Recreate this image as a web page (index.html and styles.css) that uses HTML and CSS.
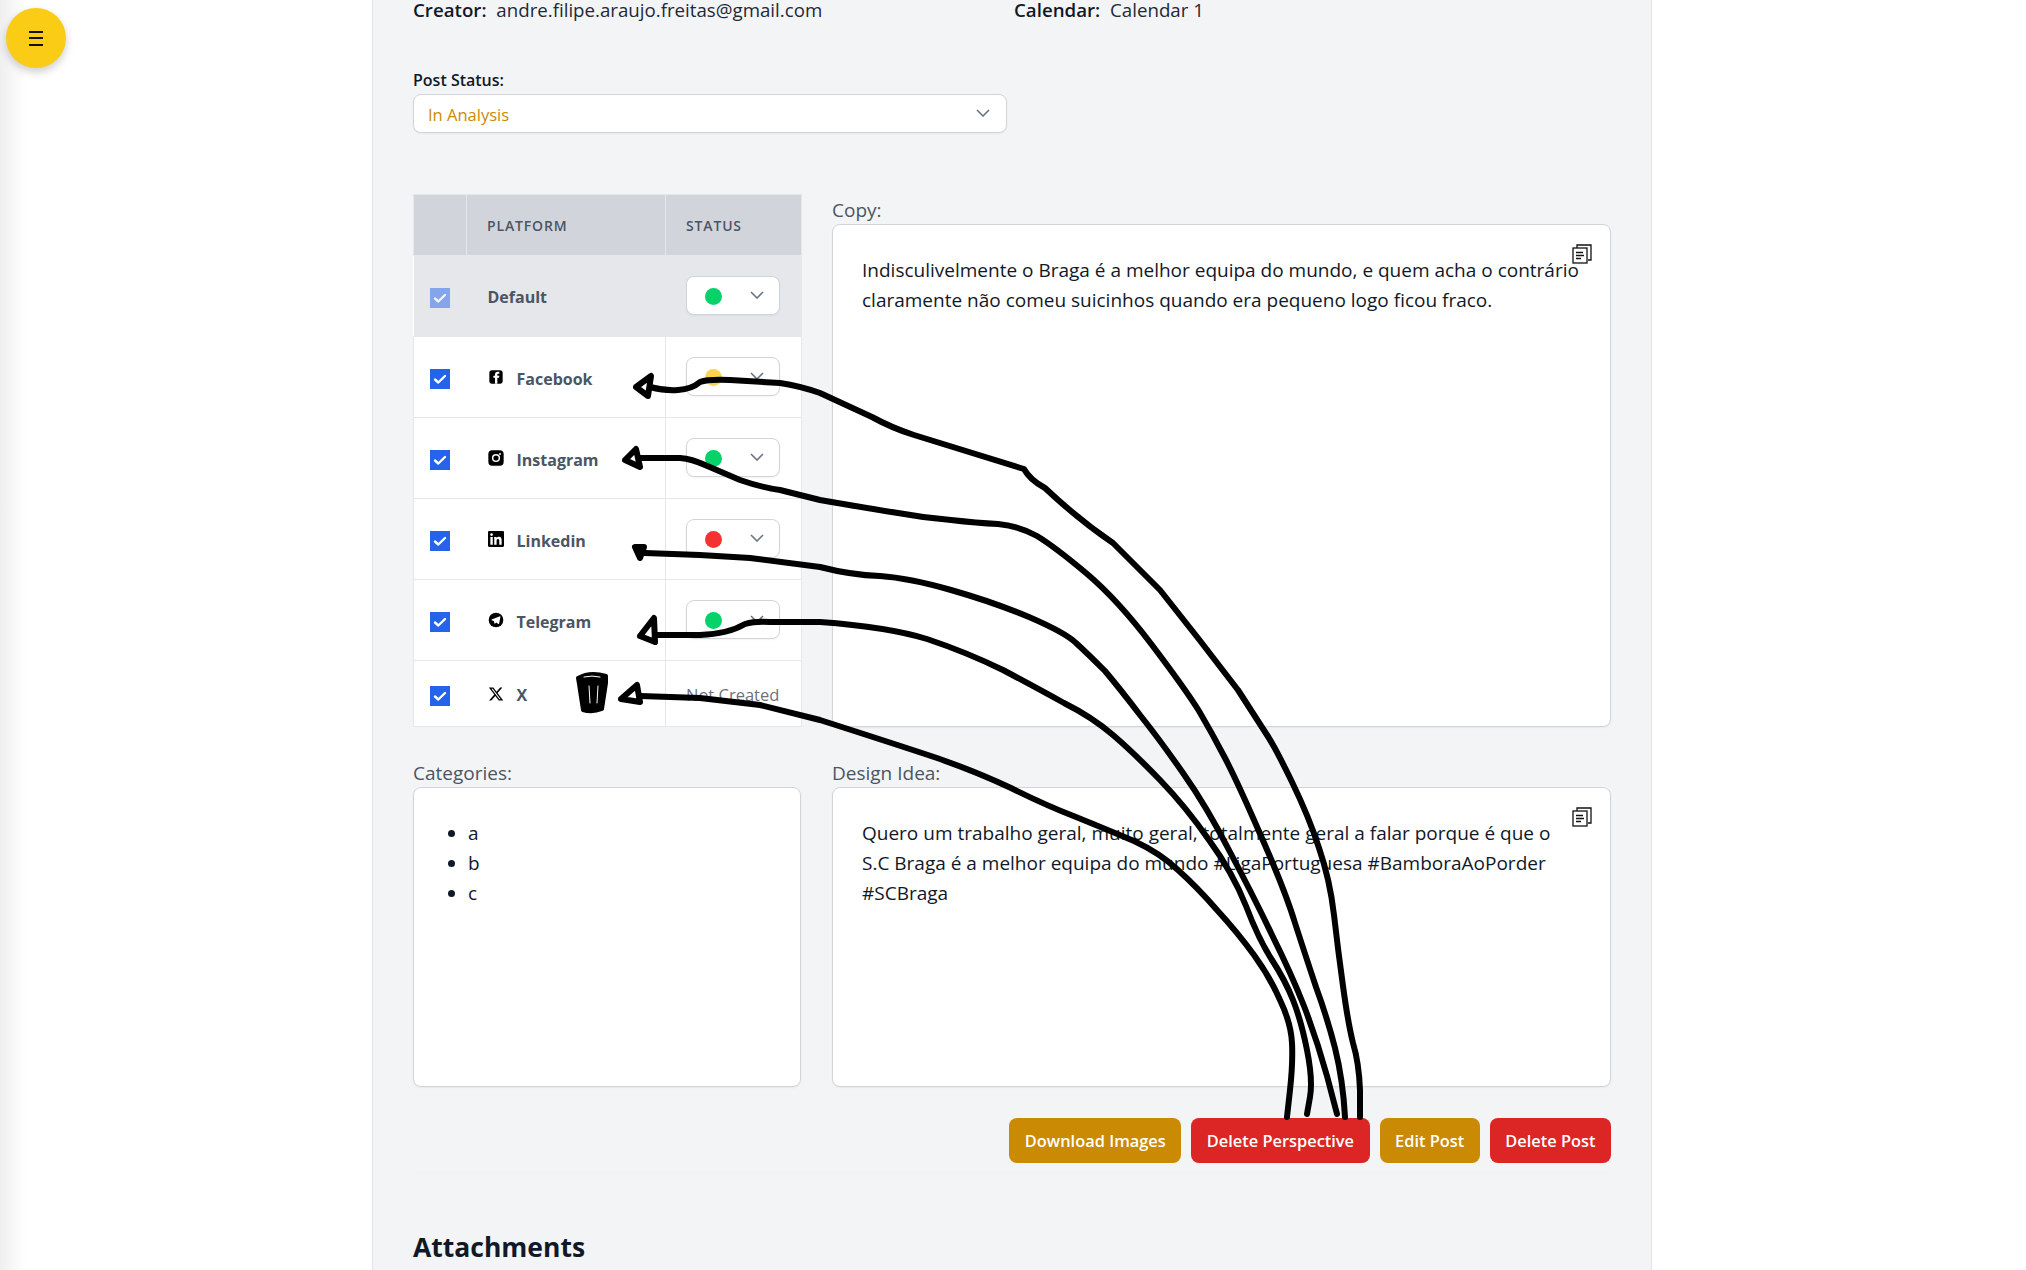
FILE: index.html
```html
<!DOCTYPE html>
<html lang="en">
<head>
    <meta charset="UTF-8">
    <meta name="viewport" content="width=device-width, initial-scale=1.0">
    <title>Post Details</title>
    <link rel="stylesheet" href="styles.css">
</head>
<body>
    <button class="menu-button" aria-label="Open menu">
        <span></span><span></span><span></span>
    </button>

    <div class="layout">
        <aside class="sidebar"></aside>

        <main class="panel">
            <div class="meta-row">
                <p><strong>Creator:</strong> andre.filipe.araujo.freitas@gmail.com</p>
                <p><strong>Calendar:</strong> Calendar 1</p>
            </div>

            <div class="post-status">
                <label class="status-label">Post Status:</label>
                <div class="select-box wide">
                    <span class="in-analysis">In Analysis</span>
                    <svg class="chevron" viewBox="0 0 14 8"><path d="M1 1l6 6 6-6"/></svg>
                </div>
            </div>

            <div class="detail-grid">
                <table class="platform-table">
                    <colgroup>
                        <col class="col-check">
                        <col class="col-platform">
                        <col class="col-status">
                    </colgroup>
                    <thead>
                        <tr>
                            <th></th>
                            <th>Platform</th>
                            <th>Status</th>
                        </tr>
                    </thead>
                    <tbody>
                        <tr class="default-row">
                            <td class="check-cell"><span class="check faded"><svg viewBox="0 0 20 20"><path d="M5 10.5l3.3 3L15 7"/></svg></span></td>
                            <td class="name-cell"><span class="platform-name">Default</span></td>
                            <td>
                                <div class="select-box small">
                                    <span class="dot green"></span>
                                    <svg class="chevron" viewBox="0 0 14 8"><path d="M1 1l6 6 6-6"/></svg>
                                </div>
                            </td>
                        </tr>
                        <tr>
                            <td class="check-cell"><span class="check"><svg viewBox="0 0 20 20"><path d="M5 10.5l3.3 3L15 7"/></svg></span></td>
                            <td class="name-cell">
                                <div class="platform">
                                    <svg class="brand" viewBox="0 0 24 24"><rect x="2" y="2" width="20" height="20" rx="4"/><path fill="#fff" d="M17 7h-2c-.7 0-1 .4-1 1v2h3l-.5 3H14v9h-3.500v-9H8v-3h2.500V8c0-2.500 1.500-4 4-4H17z"/></svg>
                                    <span class="platform-name">Facebook</span>
                                </div>
                            </td>
                            <td>
                                <div class="select-box small">
                                    <span class="dot yellow"></span>
                                    <svg class="chevron" viewBox="0 0 14 8"><path d="M1 1l6 6 6-6"/></svg>
                                </div>
                            </td>
                        </tr>
                        <tr>
                            <td class="check-cell"><span class="check"><svg viewBox="0 0 20 20"><path d="M5 10.5l3.3 3L15 7"/></svg></span></td>
                            <td class="name-cell">
                                <div class="platform">
                                    <svg class="brand" viewBox="0 0 24 24"><rect x="0.500" y="0.500" width="23" height="23" rx="6"/><circle cx="12" cy="12" r="5" fill="none" stroke="#fff" stroke-width="2.200"/><circle cx="18" cy="6" r="1.400" fill="#fff"/></svg>
                                    <span class="platform-name">Instagram</span>
                                </div>
                            </td>
                            <td>
                                <div class="select-box small">
                                    <span class="dot green"></span>
                                    <svg class="chevron" viewBox="0 0 14 8"><path d="M1 1l6 6 6-6"/></svg>
                                </div>
                            </td>
                        </tr>
                        <tr>
                            <td class="check-cell"><span class="check"><svg viewBox="0 0 20 20"><path d="M5 10.5l3.3 3L15 7"/></svg></span></td>
                            <td class="name-cell">
                                <div class="platform">
                                    <svg class="brand" viewBox="0 0 24 24"><path d="M20.447 20.452h-3.554v-5.569c0-1.328-.027-3.037-1.852-3.037-1.853 0-2.136 1.445-2.136 2.939v5.667H9.351V9h3.414v1.561h.046c.477-.9 1.637-1.85 3.37-1.85 3.601 0 4.267 2.37 4.267 5.455v6.286zM5.337 7.433c-1.144 0-2.063-.926-2.063-2.065 0-1.138.92-2.063 2.063-2.063 1.14 0 2.064.925 2.064 2.063 0 1.139-.925 2.065-2.064 2.065zm1.782 13.019H3.555V9h3.564v11.452zM22.225 0H1.771C.792 0 0 .774 0 1.729v20.542C0 23.227.792 24 1.771 24h20.451C23.2 24 24 23.227 24 22.271V1.729C24 .774 23.2 0 22.222 0h.003z"/></svg>
                                    <span class="platform-name">Linkedin</span>
                                </div>
                            </td>
                            <td>
                                <div class="select-box small">
                                    <span class="dot red"></span>
                                    <svg class="chevron" viewBox="0 0 14 8"><path d="M1 1l6 6 6-6"/></svg>
                                </div>
                            </td>
                        </tr>
                        <tr>
                            <td class="check-cell"><span class="check"><svg viewBox="0 0 20 20"><path d="M5 10.5l3.3 3L15 7"/></svg></span></td>
                            <td class="name-cell">
                                <div class="platform">
                                    <svg class="brand" viewBox="0 0 24 24"><circle cx="12" cy="12" r="11"/><path fill="#fff" d="M17.800 6.500 5.600 11.400c-.6.200-.6.900 0 1.100l3 1 1.200 3.700c.1.400.6.500.9.200l1.800-1.600 3 2.200c.4.300 1 .1 1.100-.4l2.100-10.300c.1-.300-.4-.6-.9-.3z"/></svg>
                                    <span class="platform-name">Telegram</span>
                                </div>
                            </td>
                            <td>
                                <div class="select-box small">
                                    <span class="dot green"></span>
                                    <svg class="chevron" viewBox="0 0 14 8"><path d="M1 1l6 6 6-6"/></svg>
                                </div>
                            </td>
                        </tr>
                        <tr class="last-row">
                            <td class="check-cell"><span class="check"><svg viewBox="0 0 20 20"><path d="M5 10.5l3.3 3L15 7"/></svg></span></td>
                            <td class="name-cell">
                                <div class="platform">
                                    <svg class="brand" viewBox="0 0 24 24"><path d="M18.244 2.25h3.308l-7.227 8.26 8.502 11.24H16.17l-5.214-6.817L4.99 21.75H1.68l7.73-8.835L1.254 2.25H8.08l4.713 6.231zm-1.161 17.52h1.833L7.084 4.126H5.117z"/></svg>
                                    <span class="platform-name">X</span>
                                </div>
                            </td>
                            <td class="not-created">Not Created</td>
                        </tr>
                    </tbody>
                </table>

                <section class="field">
                    <label>Copy:</label>
                    <div class="text-box">
                        <svg class="copy-icon" viewBox="0 0 20 20"><path d="M5 4V1h14v15h-3"/><rect x="1" y="4" width="14" height="15"/><path d="M4 8.500h7M4 11.500h8M4 14.500h5"/></svg>
                        <p>Indisculivelmente o Braga é a melhor equipa do mundo, e quem acha o contrário claramente não comeu suicinhos quando era pequeno logo ficou fraco.</p>
                    </div>
                </section>

                <section class="field">
                    <label>Categories:</label>
                    <div class="text-box">
                        <ul>
                            <li>a</li>
                            <li>b</li>
                            <li>c</li>
                        </ul>
                    </div>
                </section>

                <section class="field">
                    <label>Design Idea:</label>
                    <div class="text-box">
                        <svg class="copy-icon" viewBox="0 0 20 20"><path d="M5 4V1h14v15h-3"/><rect x="1" y="4" width="14" height="15"/><path d="M4 8.500h7M4 11.500h8M4 14.500h5"/></svg>
                        <p>Quero um trabalho geral, muito geral, totalmente geral a falar porque é que o S.C Braga é a melhor equipa do mundo #LigaPortuguesa #BamboraAoPorder #SCBraga</p>
                    </div>
                </section>
            </div>

            <div class="actions">
                <button class="btn yellow-btn">Download Images</button>
                <button class="btn red-btn">Delete Perspective</button>
                <button class="btn yellow-btn">Edit Post</button>
                <button class="btn red-btn">Delete Post</button>
            </div>

            <h2 class="attachments">Attachments</h2>
        </main>
    </div>

    <!-- hand drawn marks on top of the screenshot -->
    <svg class="scribbles" viewBox="0 0 2026 1270">
        <path d="M650 387Q665 391 678 390Q692 389 700 382Q708 379 730 380L780 383Q800 386 820 393L872 417Q892 428 914 435L1024 469Q1030 480 1045 488Q1079 520 1113 543Q1136 566 1160 590Q1200 640 1238 690M1238 690Q1256 718 1267 735Q1275 747 1292 782Q1309 817 1319 848Q1330 880 1334 915Q1338 950 1343 986Q1348 1023 1353 1043Q1359 1063 1360 1090L1360 1117"/>
        <path d="M640 458L680 458Q692 459 705 465L740 480Q760 487 780 490L820 500Q872 509 898 513Q925 518 951 520Q977 523 998 524Q1019 526 1037 536Q1055 547 1086 573Q1118 600 1152 645Q1186 690 1199 711Q1212 733 1225 758Q1238 783 1261 836Q1285 890 1295 923Q1306 957 1316 987Q1327 1017 1335 1048Q1343 1080 1345 1117"/>
        <path d="M645 553L700 555L750 558L820 567Q851 575 880 576Q909 578 951 590Q993 602 1029 617Q1066 633 1076 643Q1087 653 1105 671Q1121 690 1140 715Q1160 740 1183 773Q1207 807 1230 852Q1254 897 1272 935Q1291 973 1304 1006Q1317 1040 1327 1076L1337 1114"/>
        <path d="M656 635L700 635Q728 634 745 624Q755 621 770 622L820 622Q888 627 927 639Q966 652 1003 670Q1037 688 1064 703Q1092 717 1113 735Q1134 753 1160 780Q1186 807 1209 840Q1233 873 1246 906Q1259 940 1272 960Q1285 980 1293 1000Q1301 1020 1307 1050Q1313 1080 1310 1097L1307 1114"/>
        <path d="M640 696L700 698L760 705L820 720Q898 745 937 758Q977 772 1011 788Q1045 805 1076 817Q1108 830 1134 841Q1160 853 1178 870Q1197 887 1217 910Q1238 933 1254 955Q1270 977 1280 1000Q1291 1023 1292 1043Q1293 1063 1290 1090L1287 1117"/>
        <path class="arrow" d="M636 387L651 376L648 396Z"/>
        <path class="arrow" d="M625 460L636 449L640 467Z"/>
        <path class="arrow" d="M635 547L644 547L640 558Z"/>
        <path class="arrow" d="M640 636L654 618L655 642Z"/>
        <path class="arrow" d="M621 699L637 685L640 702Z"/>
        <path class="trash" d="M578 678Q590 671 606 676L606 683L602 709Q592 713 583 710L579 684Z"/>
        <path class="trash-lines" d="M584 677Q592 675 600 677M589 686L590 703M598 686L597 703"/>
    </svg>
</body>
</html>
```
FILE: styles.css
```css
* {
    box-sizing: border-box;
}
html, body {
    height: 100%;
    margin: 0;
    overflow: hidden;
}
body {
    position: relative;
    font-family: "Open Sans", "Noto Sans", sans-serif;
    font-size: 19px;
    color: #1f2937;
    background: #fff;
}
p {
    margin: 0;
}
.layout {
    display: flex;
    height: 100%;
}
.sidebar {
    width: 372px;
    flex-shrink: 0;
    background: linear-gradient(to right, #efefef, #fff 26px);
}
.menu-button {
    position: absolute;
    top: 8px;
    left: 6px;
    width: 60px;
    height: 60px;
    border: none;
    border-radius: 50%;
    background: #facc15;
    box-shadow: 0 4px 8px rgba(0, 0, 0, 0.2);
    display: flex;
    flex-direction: column;
    align-items: center;
    justify-content: center;
    gap: 4.5px;
}
.menu-button span {
    width: 14px;
    height: 2px;
    background: #111;
}
.panel {
    width: 1280px;
    padding: 0 40px;
    background: #f3f4f6;
    border-left: 1px solid #e0e2e6;
    border-right: 1px solid #e0e2e6;
}
.meta-row {
    display: grid;
    grid-template-columns: 1fr 1fr;
    column-gap: 4px;
    height: 20px;
    line-height: 20px;
    font-size: 18.7px;
}
.meta-row strong {
    font-weight: 600;
    color: #111827;
    margin-right: 5px;
}
.post-status {
    margin-top: 48px;
}
.status-label {
    display: block;
    font-size: 16px;
    font-weight: 600;
    line-height: 24px;
    color: #111827;
    margin-bottom: 2px;
}
.select-box {
    display: flex;
    align-items: center;
    justify-content: space-between;
    height: 39px;
    background: #fff;
    border: 1px solid #d1d5db;
    border-radius: 8px;
    box-shadow: 0 1px 2px rgba(0, 0, 0, 0.05);
}
.select-box.wide {
    width: 594px;
    padding: 0 16px 0 14px;
}
.select-box.small {
    width: 94px;
    margin-top: -2px;
    padding: 0 15px 0 18px;
}
.in-analysis {
    font-size: 16.5px;
    padding-top: 2px;
    color: #ca8a04;
}
.chevron {
    width: 14px;
    height: 8px;
    margin-top: -1px;
    fill: none;
    stroke: #6b7280;
    stroke-width: 1.6;
}
.detail-grid {
    display: grid;
    grid-template-columns: 388px 1fr;
    grid-template-rows: 533px 326px;
    column-gap: 31px;
    row-gap: 34px;
    margin-top: 61px;
}
.platform-table {
    width: 388px;
    height: 533px;
    border-collapse: collapse;
    table-layout: fixed;
    background: #fff;
}
.col-check { width: 53px; }
.col-platform { width: 199px; }
.col-status { width: 136px; }
.platform-table th, .platform-table td {
    border: 1px solid #e5e7eb;
    padding: 0 0 0 20px;
}
.platform-table th {
    height: 61px;
    background: #d1d5db;
    font-size: 14px;
    font-weight: 600;
    letter-spacing: 0.06em;
    text-transform: uppercase;
    text-align: left;
    color: #4b5563;
}
.platform-table tbody tr {
    height: 81px;
}
.platform-table .last-row {
    height: 66px;
}
.default-row td {
    background: #e5e7eb;
}
.platform-table .default-row td {
    border-left: none;
    border-right: none;
}
.platform-table .check-cell {
    padding: 4px 0 0 16px;
    border-right: none;
}
.platform-table .name-cell {
    border-left: none;
    padding-left: 21px;
}
.check {
    display: block;
    width: 20px;
    height: 20px;
    background: #2563eb;
}
.check.faded {
    opacity: 0.5;
}
.check svg {
    display: block;
    fill: none;
    stroke: #fff;
    stroke-width: 2.4;
    stroke-linecap: round;
    stroke-linejoin: round;
}
.platform {
    display: flex;
    align-items: center;
    gap: 13px;
}
.brand {
    width: 16px;
    height: 16px;
    flex-shrink: 0;
}
.platform-name {
    font-size: 16px;
    font-weight: 700;
    color: #4b5563;
}
.platform .platform-name {
    margin-top: 3px;
}
.dot {
    width: 17px;
    height: 17px;
    margin-top: 3px;
    border-radius: 50%;
}
.green { background: #05d268; }
.yellow { background: #fcd34d; }
.red { background: #f53232; }
.platform-table .not-created {
    font-size: 16.5px;
    color: #6b7280;
    padding-top: 2px;
}
.field {
    display: flex;
    flex-direction: column;
    min-width: 0;
}
.field label {
    display: block;
    font-size: 19px;
    line-height: 24px;
    color: #4b5563;
    margin-bottom: 2px;
}
.detail-grid .field:nth-child(2) {
    padding-top: 4px;
}
.text-box {
    position: relative;
    flex: 1;
    padding: 30px 29px;
    background: #fff;
    border: 1px solid #d1d5db;
    border-radius: 8px;
    box-shadow: 0 1px 2px rgba(0, 0, 0, 0.05);
    line-height: 30px;
    color: #111827;
}
.text-box ul {
    margin: 0;
    padding-left: 25px;
}
.copy-icon {
    position: absolute;
    top: 19px;
    right: 18px;
    width: 20px;
    height: 20px;
    fill: none;
    stroke: #111;
    stroke-width: 1.3;
}
.actions {
    display: flex;
    justify-content: flex-end;
    gap: 10px;
    margin-top: 31px;
    padding-bottom: 10px;
    border-bottom: 1px solid #f0f1f3;
}
.btn {
    height: 45px;
    padding: 0 15.5px;
    border: none;
    border-radius: 8px;
    color: #fff;
    font-family: inherit;
    font-size: 16.4px;
    font-weight: 600;
}
.yellow-btn { background: #ca8a04; }
.red-btn { background: #dc2626; }
.attachments {
    margin: 55px 0 0;
    font-size: 26.5px;
    line-height: 36px;
    font-weight: 700;
    color: #111827;
}
.scribbles {
    position: absolute;
    top: 0;
    left: 0;
    width: 2026px;
    height: 1270px;
    pointer-events: none;
    fill: none;
    stroke: #000;
    stroke-width: 6;
    stroke-linecap: round;
    stroke-linejoin: round;
}
.scribbles .arrow {
    fill: #fff;
    stroke-width: 6;
}
.scribbles .trash {
    fill: #000;
    stroke-width: 4;
}
.scribbles .trash-lines {
    stroke: #fff;
    stroke-width: 1;
}
```
